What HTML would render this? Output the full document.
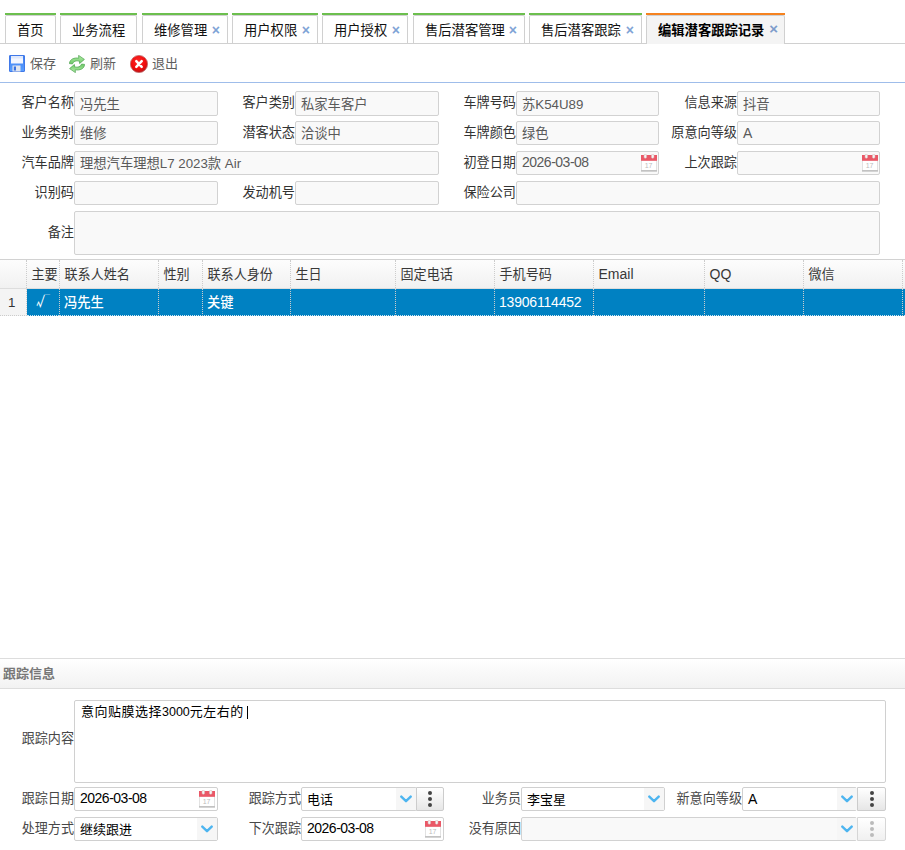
<!DOCTYPE html>
<html lang="zh-CN">
<head>
<meta charset="utf-8">
<title>编辑潜客跟踪记录</title>
<style>
*{box-sizing:border-box;margin:0;padding:0}
html,body{width:905px;height:850px;overflow:hidden;background:#fff}
body{position:relative;font-family:"Liberation Sans","Noto Sans CJK SC",sans-serif;font-size:13px;color:#333}
.abs{position:absolute}
.tabline{position:absolute;left:0;top:43px;width:905px;height:1px;background:#d0d0d0}
.tab{position:absolute;top:13px;height:30px;font-size:13px;color:#111;white-space:nowrap}
.tab i{position:absolute;left:0;top:0;right:0;height:2px;background:#6cbf4e}
.tab b{position:absolute;left:0;top:2px;right:0;bottom:0;border:1px solid #d0d0d0;border-bottom:none;border-radius:2px 2px 0 0;background:#fff;font-weight:normal}
.tab span{position:absolute;left:12px;top:8px;line-height:20px;font-size:13.3px}
.tab .x{left:auto;right:8px;top:7px;color:#7fa3d6;font-size:14px;font-weight:bold;font-family:"Liberation Sans",sans-serif}
.tab.act{height:31px}
.tab.act i{background:#f5821f}
.tab.act b{background:#f4f4f4}
.tab.act span{font-weight:bold;color:#000}
.tab.act .x{color:#7d9ccb;font-size:15px;top:6px;right:7px}
.tbtxt{position:absolute;top:55px;font-size:13px;color:#5e5e5e;line-height:18px}
.tbline{position:absolute;left:0;top:82px;width:905px;height:1px;background:#9fbdea}
.lb{position:absolute;text-align:right;font-size:13.15px;color:#333;line-height:24px;height:24px;white-space:nowrap}
.in{position:absolute;height:24px;border:1px solid #d2d2d2;border-radius:2px;background:#f9f9f9;font-size:13.3px;color:#5a5a5a;line-height:24px;padding-left:5px;white-space:nowrap;overflow:hidden}
.in.w{background:#fff;color:#000;border-color:#d0d0d0}
.lb2{font-size:13.1px;color:#484848}
.ta{font-size:13.4px;color:#000;line-height:21px;padding-left:6px;letter-spacing:0.5px}
.ta span{font-size:12.5px;letter-spacing:0}
.dt{line-height:21px;font-size:14px;letter-spacing:-0.5px}
.la{line-height:22px;font-size:14px}
.in.w.la{font-size:14px}
.in.w.dt{font-size:14px}
.in.w{font-size:13px}
.ic{position:absolute}
.arr{position:absolute;top:0;right:0;width:20px;height:100%;background:#f6f6f6}
.arr svg{position:absolute;left:4px;top:7px}
.mbtn{position:absolute;width:28px;height:24px;border:1px solid #ccc;border-radius:0 2px 2px 0;background:linear-gradient(#fff,#e6e6e6)}
.mbtn u{position:absolute;left:11px;width:4px;height:4px;border-radius:2px;background:#444}
.mbtn.dis u{background:#bbb}
.mbtn.dis{background:linear-gradient(#fff,#f0f0f0);border-color:#d6d6d6}
.ghead{position:absolute;left:0;top:259px;width:905px;height:30px;border-top:1px solid #d2d2d2;border-bottom:1px solid #ddd;background:linear-gradient(#fdfdfd,#f1f1f1)}
.gh{position:absolute;top:260px;height:28px;line-height:29px;font-size:13.1px;color:#383838;padding-left:4.5px;border-right:1px dotted #ccc;white-space:nowrap}
.grow{position:absolute;left:27px;top:289px;width:878px;height:27px;background:#0081c2;border-bottom:1px dotted #cfe6f3}
.gc{position:absolute;top:289px;height:27px;line-height:27px;font-size:13.3px;font-weight:500;color:#fff;padding-left:4px;border-right:1px dotted #ccc;white-space:nowrap}
.phead{position:absolute;left:0;top:658px;width:905px;height:31px;border-top:1px solid #ddd;border-bottom:1px solid #ddd;background:linear-gradient(#fff,#f2f2f2);font-size:13px;font-weight:bold;color:#777;line-height:29px;padding-left:3px}
</style>
</head>
<body>
<div class="tabline"></div>
<div class="tab" style="left:5px;width:51px"><i></i><b></b><span>首页</span></div>
<div class="tab" style="left:60px;width:77px"><i></i><b></b><span>业务流程</span></div>
<div class="tab" style="left:142px;width:86px"><i></i><b></b><span>维修管理</span><span class="x">×</span></div>
<div class="tab" style="left:232px;width:86px"><i></i><b></b><span>用户权限</span><span class="x">×</span></div>
<div class="tab" style="left:322px;width:86px"><i></i><b></b><span>用户授权</span><span class="x">×</span></div>
<div class="tab" style="left:413px;width:112px"><i></i><b></b><span>售后潜客管理</span><span class="x">×</span></div>
<div class="tab" style="left:529px;width:113px"><i></i><b></b><span>售后潜客跟踪</span><span class="x">×</span></div>
<div class="tab act" style="left:646px;width:139px"><i></i><b></b><span>编辑潜客跟踪记录</span><span class="x">×</span></div>
<div class="tbtxt" style="left:30px">保存</div>
<div class="tbtxt" style="left:90px">刷新</div>
<div class="tbtxt" style="left:152px">退出</div>
<div class="tbline"></div>
<svg class="ic" style="left:9px;top:55px" width="16" height="17" viewBox="0 0 16 17"><defs><linearGradient id="sg" x1="0" y1="0" x2="0" y2="1"><stop offset="0" stop-color="#3f7df0"/><stop offset="1" stop-color="#5aa0ff"/></linearGradient></defs><rect x="0.5" y="0.5" width="15" height="16" rx="0.4" fill="url(#sg)" stroke="#4179e8"/><rect x="2" y="1" width="12" height="7.5" fill="#f3f6ff"/><rect x="2" y="1" width="12" height="2.5" fill="#dfe8fb"/><rect x="3.5" y="10.5" width="8" height="6" fill="#e1e5ee"/><rect x="4.8" y="11.5" width="2.2" height="4" fill="#3a72e0"/></svg>
<svg class="ic" style="left:68.6px;top:55px" width="16" height="18" viewBox="0 0 16 18"><defs><linearGradient id="rg" x1="0" y1="0" x2="0" y2="1"><stop offset="0" stop-color="#b4eea8"/><stop offset="1" stop-color="#6cc866"/></linearGradient></defs><path d="M0.4 8.6 C0.8 4.2 5 2.4 9.8 3.2 L9.6 0.4 L15.4 4.4 L10.6 8.5 L10.3 6 C6.8 5.4 4.6 6.2 3.4 8.9 Z" fill="url(#rg)" stroke="#55a857" stroke-width="0.8" stroke-linejoin="round"/><path d="M0.4 8.6 C0.8 4.2 5 2.4 9.8 3.2 L9.6 0.4 L15.4 4.4 L10.6 8.5 L10.3 6 C6.8 5.4 4.6 6.2 3.4 8.9 Z" transform="rotate(180 8 9)" fill="url(#rg)" stroke="#55a857" stroke-width="0.8" stroke-linejoin="round"/></svg>
<svg class="ic" style="left:130px;top:55px" width="18" height="18" viewBox="0 0 18 18"><defs><radialGradient id="eg" cx="0.45" cy="0.35" r="0.65"><stop offset="0" stop-color="#ff2a2a"/><stop offset="0.7" stop-color="#ee0b0b"/><stop offset="1" stop-color="#b8161a"/></radialGradient></defs><circle cx="9" cy="9" r="8.6" fill="url(#eg)" stroke="#c26a6a" stroke-width="0.8"/><path d="M6.3 6.2 L11.7 11.8 M11.7 6.2 L6.3 11.8" stroke="#fff" stroke-width="2.5" stroke-linecap="round"/></svg>
<div class="lb" style="left:-46px;width:120px;top:91px;height:24px;line-height:23px">客户名称</div>
<div class="in" style="left:74px;top:91px;width:144px;height:25px;line-height:25px">冯先生</div>
<div class="lb" style="left:175px;width:120px;top:91px;height:24px;line-height:23px">客户类别</div>
<div class="in" style="left:295px;top:91px;width:144px;height:25px;line-height:25px">私家车客户</div>
<div class="lb" style="left:396px;width:120px;top:91px;height:24px;line-height:23px">车牌号码</div>
<div class="in" style="left:516px;top:91px;width:143px;height:25px;line-height:25px">苏K54U89</div>
<div class="lb" style="left:617px;width:120px;top:91px;height:24px;line-height:23px">信息来源</div>
<div class="in" style="left:737px;top:91px;width:143px;height:25px;line-height:25px">抖音</div>
<div class="lb" style="left:-46px;width:120px;top:121px;height:24px;line-height:23px">业务类别</div>
<div class="in" style="left:74px;top:121px;width:144px;height:24px">维修</div>
<div class="lb" style="left:175px;width:120px;top:121px;height:24px;line-height:23px">潜客状态</div>
<div class="in" style="left:295px;top:121px;width:144px;height:24px">洽谈中</div>
<div class="lb" style="left:396px;width:120px;top:121px;height:24px;line-height:23px">车牌颜色</div>
<div class="in" style="left:516px;top:121px;width:143px;height:24px">绿色</div>
<div class="lb" style="left:617px;width:120px;top:121px;height:24px;line-height:23px">原意向等级</div>
<div class="in la" style="left:737px;top:121px;width:143px;height:24px">A</div>
<div class="lb" style="left:-46px;width:120px;top:151px;height:24px;line-height:23px">汽车品牌</div>
<div class="in" style="left:74px;top:151px;width:365px;height:24px">理想汽车理想L7 2023款 Air</div>
<div class="lb" style="left:396px;width:120px;top:151px;height:24px;line-height:23px">初登日期</div>
<div class="in dt" style="left:516px;top:151px;width:143px;height:24px">2026-03-08</div>
<div class="lb" style="left:617px;width:120px;top:151px;height:24px;line-height:23px">上次跟踪</div>
<div class="in" style="left:737px;top:151px;width:143px;height:24px"></div>
<svg class="ic" style="left:641px;top:154px" width="16" height="18" viewBox="0 0 16 18"><rect x="0.5" y="6" width="15" height="11" fill="#fff" stroke="#e2e2e2"/><rect x="0" y="16" width="16" height="1.6" fill="#c2c2c2"/><rect x="0" y="1" width="16" height="5.8" fill="#ea5867"/><rect x="3" y="0.3" width="2.6" height="4" rx="1.2" fill="#f4f4f4" stroke="#d8b0b0" stroke-width="0.5"/><rect x="10.4" y="0.3" width="2.6" height="4" rx="1.2" fill="#f4f4f4" stroke="#d8b0b0" stroke-width="0.5"/><text x="7.6" y="14.3" font-family="Liberation Sans,sans-serif" font-size="7" fill="#bcbcbc" text-anchor="middle">17</text></svg>
<svg class="ic" style="left:862px;top:154px" width="16" height="18" viewBox="0 0 16 18"><rect x="0.5" y="6" width="15" height="11" fill="#fff" stroke="#e2e2e2"/><rect x="0" y="16" width="16" height="1.6" fill="#c2c2c2"/><rect x="0" y="1" width="16" height="5.8" fill="#ea5867"/><rect x="3" y="0.3" width="2.6" height="4" rx="1.2" fill="#f4f4f4" stroke="#d8b0b0" stroke-width="0.5"/><rect x="10.4" y="0.3" width="2.6" height="4" rx="1.2" fill="#f4f4f4" stroke="#d8b0b0" stroke-width="0.5"/><text x="7.6" y="14.3" font-family="Liberation Sans,sans-serif" font-size="7" fill="#bcbcbc" text-anchor="middle">17</text></svg>
<div class="lb" style="left:-46px;width:120px;top:181px;height:24px;line-height:23px">识别码</div>
<div class="in" style="left:74px;top:181px;width:144px;height:24px"></div>
<div class="lb" style="left:175px;width:120px;top:181px;height:24px;line-height:23px">发动机号</div>
<div class="in" style="left:295px;top:181px;width:144px;height:24px"></div>
<div class="lb" style="left:396px;width:120px;top:181px;height:24px;line-height:23px">保险公司</div>
<div class="in" style="left:516px;top:181px;width:364px;height:24px"></div>
<div class="lb" style="left:-46px;width:120px;top:211px;height:44px;line-height:43px">备注</div>
<div class="in" style="left:74px;top:211px;width:806px;height:44px"></div>
<div class="ghead"></div>
<div class="grow"></div>
<div class="gh" style="left:0px;width:27px"></div>
<div class="gc" style="left:0px;width:27px;color:#333;font-weight:normal;background:#f4f4f4;border-bottom:1px dotted #ccc;padding-left:8px">1</div>
<div class="gh" style="left:27px;width:33px">主要</div>
<div class="gc" style="left:27px;width:33px;font-family:IPAGothic,'Noto Serif CJK SC',serif;font-weight:normal;font-size:14px;padding-left:9px">√</div>
<div class="gh" style="left:60px;width:99px">联系人姓名</div>
<div class="gc" style="left:60px;width:99px">冯先生</div>
<div class="gh" style="left:159px;width:44px">性别</div>
<div class="gc" style="left:159px;width:44px"></div>
<div class="gh" style="left:203px;width:88px">联系人身份</div>
<div class="gc" style="left:203px;width:88px">关键</div>
<div class="gh" style="left:291px;width:105px">生日</div>
<div class="gc" style="left:291px;width:105px"></div>
<div class="gh" style="left:396px;width:99px">固定电话</div>
<div class="gc" style="left:396px;width:99px"></div>
<div class="gh" style="left:495px;width:99px">手机号码</div>
<div class="gc" style="left:495px;width:99px"><span style="font-size:14px;letter-spacing:-0.2px">13906114452</span></div>
<div class="gh" style="left:594px;width:111px"><span style="font-size:14px">Email</span></div>
<div class="gc" style="left:594px;width:111px"></div>
<div class="gh" style="left:705px;width:99px"><span style="font-size:14px">QQ</span></div>
<div class="gc" style="left:705px;width:99px"></div>
<div class="gh" style="left:804px;width:99px">微信</div>
<div class="gc" style="left:804px;width:99px"></div>
<div class="phead">跟踪信息</div>
<div class="lb lb2" style="left:-46px;width:120px;top:698px;height:83px;line-height:82px">跟踪内容</div>
<div class="in w ta" style="left:74px;top:700px;width:812px;height:83px">意向贴膜选择<span>3000</span>元左右的</div>
<div class="abs" style="left:247px;top:706px;width:1px;height:13px;background:#000"></div>
<div class="lb lb2" style="left:-46px;width:120px;top:787px;height:24px;line-height:23px">跟踪日期</div>
<div class="in w dt" style="left:74px;top:787px;width:144px;height:24px">2026-03-08</div>
<div class="lb lb2" style="left:181px;width:120px;top:787px;height:24px;line-height:23px">跟踪方式</div>
<div class="in w" style="left:301px;top:787px;width:116px;height:24px">电话</div>
<div class="lb lb2" style="left:401px;width:120px;top:787px;height:24px;line-height:23px">业务员</div>
<div class="in w" style="left:521px;top:787px;width:144px;height:24px">李宝星</div>
<div class="lb lb2" style="left:622px;width:120px;top:787px;height:24px;line-height:23px">新意向等级</div>
<div class="in w la" style="left:742px;top:787px;width:115px;height:24px">A</div>
<div class="lb lb2" style="left:-46px;width:120px;top:817px;height:24px;line-height:23px">处理方式</div>
<div class="in w" style="left:74px;top:817px;width:144px;height:24px">继续跟进</div>
<div class="lb lb2" style="left:181px;width:120px;top:817px;height:24px;line-height:23px">下次跟踪</div>
<div class="in w dt" style="left:301px;top:817px;width:143px;height:24px">2026-03-08</div>
<div class="lb lb2" style="left:401px;width:120px;top:817px;height:24px;line-height:23px">没有原因</div>
<div class="in" style="left:521px;top:817px;width:336px;height:24px"></div>
<svg class="ic" style="left:199px;top:790px" width="16" height="18" viewBox="0 0 16 18"><rect x="0.5" y="6" width="15" height="11" fill="#fff" stroke="#e2e2e2"/><rect x="0" y="16" width="16" height="1.6" fill="#c2c2c2"/><rect x="0" y="1" width="16" height="5.8" fill="#ea5867"/><rect x="3" y="0.3" width="2.6" height="4" rx="1.2" fill="#f4f4f4" stroke="#d8b0b0" stroke-width="0.5"/><rect x="10.4" y="0.3" width="2.6" height="4" rx="1.2" fill="#f4f4f4" stroke="#d8b0b0" stroke-width="0.5"/><text x="7.6" y="14.3" font-family="Liberation Sans,sans-serif" font-size="7" fill="#bcbcbc" text-anchor="middle">17</text></svg>
<svg class="ic" style="left:425px;top:820px" width="16" height="18" viewBox="0 0 16 18"><rect x="0.5" y="6" width="15" height="11" fill="#fff" stroke="#e2e2e2"/><rect x="0" y="16" width="16" height="1.6" fill="#c2c2c2"/><rect x="0" y="1" width="16" height="5.8" fill="#ea5867"/><rect x="3" y="0.3" width="2.6" height="4" rx="1.2" fill="#f4f4f4" stroke="#d8b0b0" stroke-width="0.5"/><rect x="10.4" y="0.3" width="2.6" height="4" rx="1.2" fill="#f4f4f4" stroke="#d8b0b0" stroke-width="0.5"/><text x="7.6" y="14.3" font-family="Liberation Sans,sans-serif" font-size="7" fill="#bcbcbc" text-anchor="middle">17</text></svg>
<div class="abs" style="left:396px;top:788px;width:20px;height:22px;background:#f6f6f6"></div>
<svg class="ic" style="left:399px;top:795px" width="14" height="9" viewBox="0 0 14 9"><path d="M2.3 1.6 L7 6.2 L11.7 1.6" fill="none" stroke="#4db5f0" stroke-width="2.4" stroke-linecap="round" stroke-linejoin="round"/></svg>
<div class="mbtn" style="left:416px;top:787px;height:24px;width:28px"><u style="top:3.1px;left:11.0px"></u><u style="top:8.9px;left:11.0px"></u><u style="top:14.7px;left:11.0px"></u></div>
<div class="abs" style="left:644px;top:788px;width:20px;height:22px;background:#f6f6f6"></div>
<svg class="ic" style="left:647px;top:795px" width="14" height="9" viewBox="0 0 14 9"><path d="M2.3 1.6 L7 6.2 L11.7 1.6" fill="none" stroke="#4db5f0" stroke-width="2.4" stroke-linecap="round" stroke-linejoin="round"/></svg>
<div class="abs" style="left:837px;top:788px;width:20px;height:22px;background:#f6f6f6"></div>
<svg class="ic" style="left:840px;top:795px" width="14" height="9" viewBox="0 0 14 9"><path d="M2.3 1.6 L7 6.2 L11.7 1.6" fill="none" stroke="#4db5f0" stroke-width="2.4" stroke-linecap="round" stroke-linejoin="round"/></svg>
<div class="mbtn" style="left:857px;top:787px;height:24px;width:29px"><u style="top:3.1px;left:11.5px"></u><u style="top:8.9px;left:11.5px"></u><u style="top:14.7px;left:11.5px"></u></div>
<div class="abs" style="left:197px;top:818px;width:20px;height:22px;background:#f6f6f6"></div>
<svg class="ic" style="left:200px;top:825px" width="14" height="9" viewBox="0 0 14 9"><path d="M2.3 1.6 L7 6.2 L11.7 1.6" fill="none" stroke="#4db5f0" stroke-width="2.4" stroke-linecap="round" stroke-linejoin="round"/></svg>
<div class="abs" style="left:837px;top:818px;width:20px;height:22px;background:#f6f6f6"></div>
<svg class="ic" style="left:840px;top:825px" width="14" height="9" viewBox="0 0 14 9"><path d="M2.3 1.6 L7 6.2 L11.7 1.6" fill="none" stroke="#4db5f0" stroke-width="2.4" stroke-linecap="round" stroke-linejoin="round"/></svg>
<div class="mbtn dis" style="left:857px;top:817px;height:24px;width:29px"><u style="top:3.1px;left:11.5px"></u><u style="top:8.9px;left:11.5px"></u><u style="top:14.7px;left:11.5px"></u></div>
</body>
</html>
